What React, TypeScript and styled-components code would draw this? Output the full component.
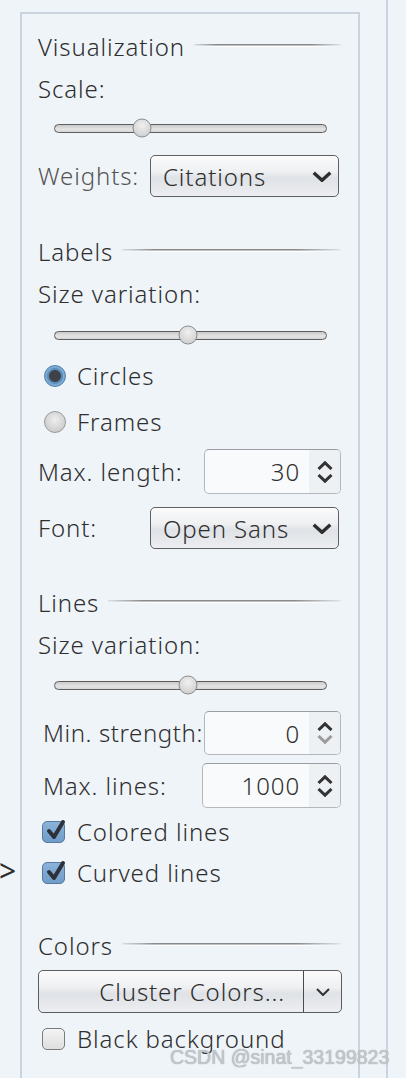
import React from 'react';
import styled, { createGlobalStyle } from 'styled-components';

const Global = createGlobalStyle`
  html, body { margin: 0; padding: 0; background: #eff4f9; }
  body { font-family: "Noto Sans", "Open Sans", sans-serif; font-weight: 300; color: #2e2e2e; letter-spacing: 0.9px; }
  * { box-sizing: border-box; }
`;

const Page = styled.div`
  position: relative;
  width: 406px;
  height: 1078px;
  overflow: hidden;
  background: #eff4f9;
  display: flex;
  align-items: stretch;
  padding-left: 20px;
`;

const Panel = styled.div`
  margin-top: 12px;
  width: 340px;
  border: 2px solid #c9d4df;
  border-bottom: none;
  padding: 18px 17px 0 16px;
  display: flex;
  flex-direction: column;
`;

const RightRule = styled.div`
  margin-left: 26px;
  width: 2px;
  background: #c9d4df;
`;

const Section = styled.section<{ $mt: number }>`
  display: flex;
  flex-direction: column;
  margin-top: ${p => p.$mt}px;
`;

const Heading = styled.div`
  display: flex;
  align-items: center;
  gap: 9px;
  height: 30px;
  font-size: 24px;
  line-height: 30px;
`;

const HeadingRule = styled.div`
  flex: 1;
  height: 3px;
  margin-top: -3px;
  background:
    linear-gradient(to right, rgba(140,140,140,0.2), #8a8a8a 15%, #8a8a8a 80%, rgba(140,140,140,0.15)) top / 100% 1.5px no-repeat,
    linear-gradient(to right, transparent, #ffffff 20%, #ffffff 80%, transparent) bottom / 100% 1.5px no-repeat;
`;

const Label = styled.div<{ $mt?: number }>`
  height: 30px;
  line-height: 30px;
  font-size: 24px;
  margin-top: ${p => p.$mt ?? 0}px;
  white-space: nowrap;
`;

const SliderRow = styled.div<{ $mt: number }>`
  height: 30px;
  margin-top: ${p => p.$mt}px;
  padding: 0 14px 0 16px;
  display: flex;
  align-items: center;
`;

const Track = styled.div`
  position: relative;
  flex: 1;
  height: 9px;
  border-radius: 5px;
  border: 1.5px solid #5e5e5e;
  background: linear-gradient(to bottom, #c9c9c9, #e4e4e4 60%, #d6d6d6);
`;

const Thumb = styled.div`
  position: absolute;
  top: 50%;
  width: 19px;
  height: 19px;
  border-radius: 50%;
  transform: translate(-50%, -50%);
  border: 1px solid #8a8a8a;
  background: radial-gradient(circle at 50% 35%, #f0f0f0, #d4d4d4 70%, #c6c6c6);
`;

const ControlRow = styled.div<{ $mt: number; $h: number; $indent?: number }>`
  display: flex;
  align-items: center;
  justify-content: space-between;
  height: ${p => p.$h}px;
  margin-top: ${p => p.$mt}px;
  padding-left: ${p => p.$indent ?? 0}px;
`;

const RowLabel = styled.span<{ $muted?: boolean; $ls?: number }>`
  font-size: 24px;
  line-height: 30px;
  white-space: nowrap;
  letter-spacing: ${p => p.$ls ?? 0.9}px;
  color: ${p => (p.$muted ? '#555' : 'inherit')};
`;

const Select = styled.div<{ $w: number }>`
  flex: none;
  width: ${p => p.$w}px;
  height: 100%;
  margin-right: 2px;
  border: 1.5px solid #5f5f5f;
  border-radius: 5px;
  background: linear-gradient(to bottom, #fbfbfc 0%, #eef0f2 40%, #dfe2e6 55%, #eceef1 100%);
  display: flex;
  align-items: center;
  justify-content: space-between;
  padding: 0 6px 0 12px;
  font-size: 24px;
`;

const Spinner = styled.div<{ $w: number }>`
  flex: none;
  width: ${p => p.$w}px;
  height: 100%;
  border: 1px solid #b4b8bd;
  border-top-color: #9a9ea3;
  border-radius: 5px;
  background: #f8fafc;
  display: flex;
  align-items: stretch;
  overflow: hidden;
`;

const SpinValue = styled.div`
  flex: 1;
  display: flex;
  align-items: center;
  justify-content: flex-end;
  padding-right: 9px;
  font-size: 24px;
`;

const SpinArrows = styled.div`
  width: 31px;
  background: #eef1f4;
  display: flex;
  flex-direction: column;
  align-items: center;
  justify-content: center;
  gap: 4px;
`;

const OptionRow = styled.label<{ $mt: number; $indent: number; $gap: number }>`
  display: flex;
  align-items: center;
  gap: ${p => p.$gap}px;
  height: 30px;
  margin-top: ${p => p.$mt}px;
  padding-left: ${p => p.$indent}px;
  font-size: 24px;
  line-height: 30px;
  white-space: nowrap;
`;

const RadioDot = styled.span<{ $on: boolean }>`
  width: 22px;
  height: 22px;
  border-radius: 50%;
  flex: none;
  border: 1px solid ${p => (p.$on ? '#4e7eac' : '#9a9a9a')};
  background: ${p =>
    p.$on
      ? 'radial-gradient(circle, #3e4246 0 5.5px, #5b8cbc 6.5px 7.5px, #7eaad4 8.5px)'
      : 'radial-gradient(circle at 50% 40%, #eeeeee, #cfcfcf 70%, #bdbdbd)'};
`;

const CheckBox = styled.span<{ $on: boolean }>`
  position: relative;
  width: 23px;
  height: 22px;
  flex: none;
  border-radius: 5px;
  border: 1.5px solid ${p => (p.$on ? '#55799f' : '#7a7a7a')};
  background: ${p =>
    p.$on ? 'linear-gradient(to bottom, #8bb3da, #6f9cc9)' : 'linear-gradient(to bottom, #f4f4f4, #dedede)'};
  svg {
    position: absolute;
    left: 2px;
    top: -3px;
  }
`;

const SplitButton = styled.div<{ $mt: number }>`
  display: flex;
  height: 43px;
  margin-top: ${p => p.$mt}px;
  margin-right: -1px;
  border: 1.5px solid #5c5c5c;
  border-radius: 5px;
  background: linear-gradient(to bottom, #fbfbfc 0%, #eef0f2 40%, #dfe2e6 55%, #eceef1 100%);
  overflow: hidden;
`;

const SplitMain = styled.div`
  flex: 1;
  display: flex;
  align-items: center;
  justify-content: flex-end;
  padding-right: 18px;
  font-size: 24px;
  border-right: 1.5px solid #4a4a4a;
`;

const SplitArrow = styled.div`
  width: 37px;
  display: flex;
  align-items: center;
  justify-content: center;
`;

const SideMark = styled.div`
  position: absolute;
  left: -1px;
  top: 855px;
  font-size: 30px;
  font-weight: 400;
  line-height: 32px;
`;

const Watermark = styled.div`
  position: absolute;
  left: 170px;
  top: 1046px;
  font-family: "Liberation Sans", Arial, sans-serif;
  font-weight: 400;
  letter-spacing: 0;
  font-size: 19.5px;
  color: #c4c8cc;
  text-shadow: 0 0 1px #8d9196;
  white-space: nowrap;
`;

const Chevron = ({ w = 20, h = 11, sw = 3.4, color = '#2e2e2e' }: { w?: number; h?: number; sw?: number; color?: string }) => (
  <svg width={w} height={h} viewBox={`0 0 ${w} ${h}`}>
    <path d={`M${sw / 2} ${sw / 2} L${w / 2} ${h - sw / 2} L${w - sw / 2} ${sw / 2}`} fill="none" stroke={color} strokeWidth={sw} />
  </svg>
);

const SpinArrowIcon = ({ up, color }: { up: boolean; color: string }) => (
  <svg width="16" height="9" viewBox="0 0 16 9">
    <path d={up ? 'M1.5 8 L8 1.8 L14.5 8' : 'M1.5 1 L8 7.2 L14.5 1'} fill="none" stroke={color} strokeWidth="3" />
  </svg>
);

const CheckMark = () => (
  <svg width="21" height="22" viewBox="0 0 21 22">
    <path d="M4 12 L9 18 L18 3" fill="none" stroke="#2d3138" strokeWidth="4" strokeLinecap="round" strokeLinejoin="round" />
  </svg>
);

const Slider = ({ value, mt }: { value: number; mt: number }) => (
  <SliderRow $mt={mt}>
    <Track>
      <Thumb style={{ left: `${value * 100}%` }} />
    </Track>
  </SliderRow>
);

const SectionHeading = ({ title }: { title: string }) => (
  <Heading>
    <span>{title}</span>
    <HeadingRule />
  </Heading>
);

const SpinBox = ({ value, w, downDisabled }: { value: string; w: number; downDisabled?: boolean }) => (
  <Spinner $w={w}>
    <SpinValue>{value}</SpinValue>
    <SpinArrows>
      <SpinArrowIcon up color="#333" />
      <SpinArrowIcon up={false} color={downDisabled ? '#9c9c9c' : '#333'} />
    </SpinArrows>
  </Spinner>
);

export default function App() {
  return (
    <>
      <Global />
      <Page>
        <Panel>
          <Section $mt={0}>
            <SectionHeading title="Visualization" />
            <Label $mt={12}>Scale:</Label>
            <Slider value={0.32} mt={9} />
            <ControlRow $mt={12} $h={42}>
              <RowLabel $muted>Weights:</RowLabel>
              <Select $w={189}>
                <span>Citations</span>
                <Chevron />
              </Select>
            </ControlRow>
          </Section>

          <Section $mt={40}>
            <SectionHeading title="Labels" />
            <Label $mt={12}>Size variation:</Label>
            <Slider value={0.49} mt={11} />
            <OptionRow $mt={11} $indent={6} $gap={11}>
              <RadioDot $on />
              Circles
            </OptionRow>
            <OptionRow $mt={16} $indent={6} $gap={11}>
              <RadioDot $on={false} />
              Frames
            </OptionRow>
            <ControlRow $mt={12} $h={45}>
              <RowLabel>Max. length:</RowLabel>
              <SpinBox value="30" w={137} />
            </ControlRow>
            <ControlRow $mt={13} $h={42}>
              <RowLabel>Font:</RowLabel>
              <Select $w={189}>
                <span>Open Sans</span>
                <Chevron />
              </Select>
            </ControlRow>
          </Section>

          <Section $mt={39}>
            <SectionHeading title="Lines" />
            <Label $mt={12}>Size variation:</Label>
            <Slider value={0.49} mt={10} />
            <ControlRow $mt={11} $h={44} $indent={5}>
              <RowLabel $ls={0.6}>Min. strength:</RowLabel>
              <SpinBox value="0" w={137} downDisabled />
            </ControlRow>
            <ControlRow $mt={8} $h={45} $indent={5}>
              <RowLabel>Max. lines:</RowLabel>
              <SpinBox value="1000" w={139} />
            </ControlRow>
            <OptionRow $mt={9} $indent={4} $gap={12}>
              <CheckBox $on>
                <CheckMark />
              </CheckBox>
              Colored lines
            </OptionRow>
            <OptionRow $mt={11} $indent={4} $gap={12}>
              <CheckBox $on>
                <CheckMark />
              </CheckBox>
              Curved lines
            </OptionRow>
          </Section>

          <Section $mt={43}>
            <SectionHeading title="Colors" />
            <SplitButton $mt={9}>
              <SplitMain>Cluster Colors...</SplitMain>
              <SplitArrow>
                <Chevron w={14} h={8} sw={2} color="#333" />
              </SplitArrow>
            </SplitButton>
            <OptionRow $mt={11} $indent={4} $gap={12}>
              <CheckBox $on={false} />
              Black background
            </OptionRow>
          </Section>
        </Panel>
        <RightRule />
        <SideMark>&gt;</SideMark>
        <Watermark>CSDN @sinat_33199823</Watermark>
      </Page>
    </>
  );
}
